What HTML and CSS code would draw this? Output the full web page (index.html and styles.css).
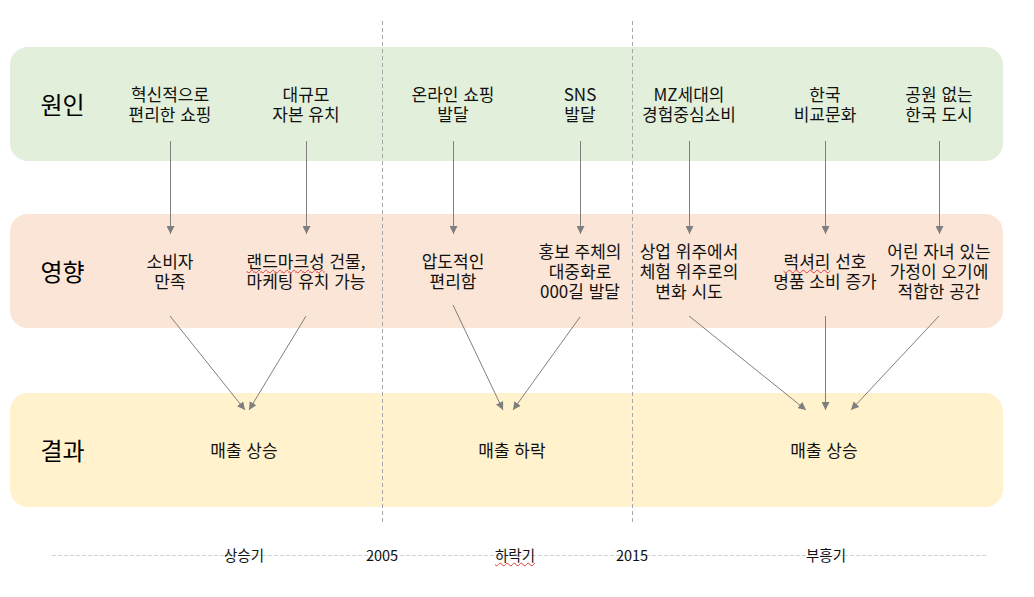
FILE: index.html
```html
<!DOCTYPE html>
<html lang="ko">
<head>
<meta charset="utf-8">
<title>원인 · 영향 · 결과</title>
<link rel="stylesheet" href="styles.css">
</head>
<body>
<main class="page">
  <section class="bands">
    <div class="band band-cause">
      <div class="label">원인</div>
      <div class="cell"><div class="txt">혁신적으로<br>편리한 쇼핑</div></div>
      <div class="cell"><div class="txt">대규모<br>자본 유치</div></div>
      <div class="cell"><div class="txt">온라인 쇼핑<br>발달</div></div>
      <div class="cell"><div class="txt">SNS<br>발달</div></div>
      <div class="cell"><div class="txt">MZ세대의<br>경험중심소비</div></div>
      <div class="cell"><div class="txt">한국<br>비교문화</div></div>
      <div class="cell"><div class="txt">공원 없는<br>한국 도시</div></div>
    </div>
    <div class="band band-effect">
      <div class="label">영향</div>
      <div class="cell"><div class="txt">소비자<br>만족</div></div>
      <div class="cell"><div class="txt"><span class="spell">랜드마크성</span> 건물,<br>마케팅 유치 가능</div></div>
      <div class="cell"><div class="txt">압도적인<br>편리함</div></div>
      <div class="cell"><div class="txt">홍보 주체의<br>대중화로<br>000길 발달</div></div>
      <div class="cell"><div class="txt">상업 위주에서<br>체험 위주로의<br>변화 시도</div></div>
      <div class="cell"><div class="txt"><span class="spell">럭셔리</span> 선호<br>명품 소비 증가</div></div>
      <div class="cell"><div class="txt">어린 자녀 있는<br>가정이 오기에<br>적합한 공간</div></div>
    </div>
    <div class="band band-result">
      <div class="label">결과</div>
      <div class="cell"><div class="txt">매출 상승</div></div>
      <div class="cell"><div class="txt">매출 하락</div></div>
      <div class="cell"><div class="txt">매출 상승</div></div>
    </div>
  </section>

  <div class="timeline">
    <div class="tick">상승기</div>
    <div class="tick">2005</div>
    <div class="tick"><span class="spell">하락기</span></div>
    <div class="tick">2015</div>
    <div class="tick">부흥기</div>
  </div>

  <svg class="overlay" width="1034" height="597" viewBox="0 0 1034 597" aria-hidden="true">
    <defs>
      <marker id="ah" viewBox="0 0 10 10" refX="10" refY="5" markerWidth="8" markerHeight="8" markerUnits="userSpaceOnUse" orient="auto">
        <path d="M0,0 L10,5 L0,10 z" fill="#7f7f7f"/>
      </marker>
    </defs>
    <g class="era">
      <line x1="382.5" y1="21" x2="382.5" y2="523"/>
      <line x1="632.5" y1="21" x2="632.5" y2="523"/>
    </g>
    <g class="arrows">
      <line x1="170.5" y1="141" x2="170.5" y2="234"/>
      <line x1="306.5" y1="141" x2="306.5" y2="234"/>
      <line x1="453.5" y1="141" x2="453.5" y2="234"/>
      <line x1="580.5" y1="141" x2="580.5" y2="234"/>
      <line x1="689.5" y1="141" x2="689.5" y2="234"/>
      <line x1="825.5" y1="141" x2="825.5" y2="234"/>
      <line x1="939.5" y1="141" x2="939.5" y2="234"/>

      <line x1="170" y1="316" x2="245" y2="410"/>
      <line x1="306" y1="316" x2="249" y2="410"/>
      <line x1="453" y1="305" x2="503" y2="410"/>
      <line x1="580" y1="317" x2="513" y2="410"/>
      <line x1="689" y1="316" x2="806" y2="410"/>
      <line x1="825.5" y1="316" x2="825.5" y2="410"/>
      <line x1="939" y1="316" x2="851" y2="410"/>
    </g>
  </svg>
</main>
</body>
</html>
```

FILE: styles.css
```css
* { box-sizing: border-box; }

html, body {
  margin: 0;
  padding: 0;
  background: #ffffff;
}

body {
  font-family: "Noto Sans CJK KR", "Noto Sans", "Liberation Sans", sans-serif;
  color: #111111;
  width: 1034px;
  height: 597px;
  overflow: hidden;
}

.page {
  position: relative;
  width: 1034px;
  height: 597px;
  padding: 47px 31px 0 10px;
}

.bands {
  display: flex;
  flex-direction: column;
  width: 993px;
}

.band {
  display: grid;
  align-items: center;
  height: 114px;
  border-radius: 18px;
  grid-template-columns: 105px 110px 162px 132px 122px 96px 176px 52px;
}

.band-cause { background: #e2efda; }
.band-effect { background: #fbe5d6; margin-top: 53px; }
.band-result {
  background: #fff2cc;
  margin-top: 65px;
  grid-template-columns: 105px 258px 278px 346px;
}

.label {
  display: flex;
  justify-content: center;
  font-size: 24px;
  font-weight: 400;
  line-height: 30px;
  color: #000000;
}

.cell {
  display: flex;
  justify-content: center;
  min-width: 0;
}

.txt {
  flex: none;
  white-space: nowrap;
  text-align: center;
  font-size: 17px;
  line-height: 20px;
  color: #111111;
}

.spell {
  text-decoration: underline wavy #e23b3b;
  text-decoration-thickness: 1px;
  text-underline-offset: 1px;
}

.timeline {
  display: grid;
  grid-template-columns: 120px 156px 110px 124px 264px;
  margin: 38px 0 0 42px;
  width: 935px;
  height: 20px;
  padding-left: 132px;
  align-items: center;
  background-image: repeating-linear-gradient(90deg, #d2d2d2 0 4px, transparent 4px 6px);
  background-size: 100% 1px;
  background-position: 0 10px;
  background-repeat: no-repeat;
}

.tick {
  display: flex;
  justify-content: center;
  font-size: 14.5px;
  line-height: 20px;
  color: #111111;
  white-space: nowrap;
}

.overlay {
  position: absolute;
  top: 0;
  left: 0;
  pointer-events: none;
}

.era line {
  stroke: #a6a6a6;
  stroke-width: 1;
  stroke-dasharray: 4 3;
}

.arrows line {
  stroke: #7f7f7f;
  stroke-width: 1;
  marker-end: url(#ah);
}
```
